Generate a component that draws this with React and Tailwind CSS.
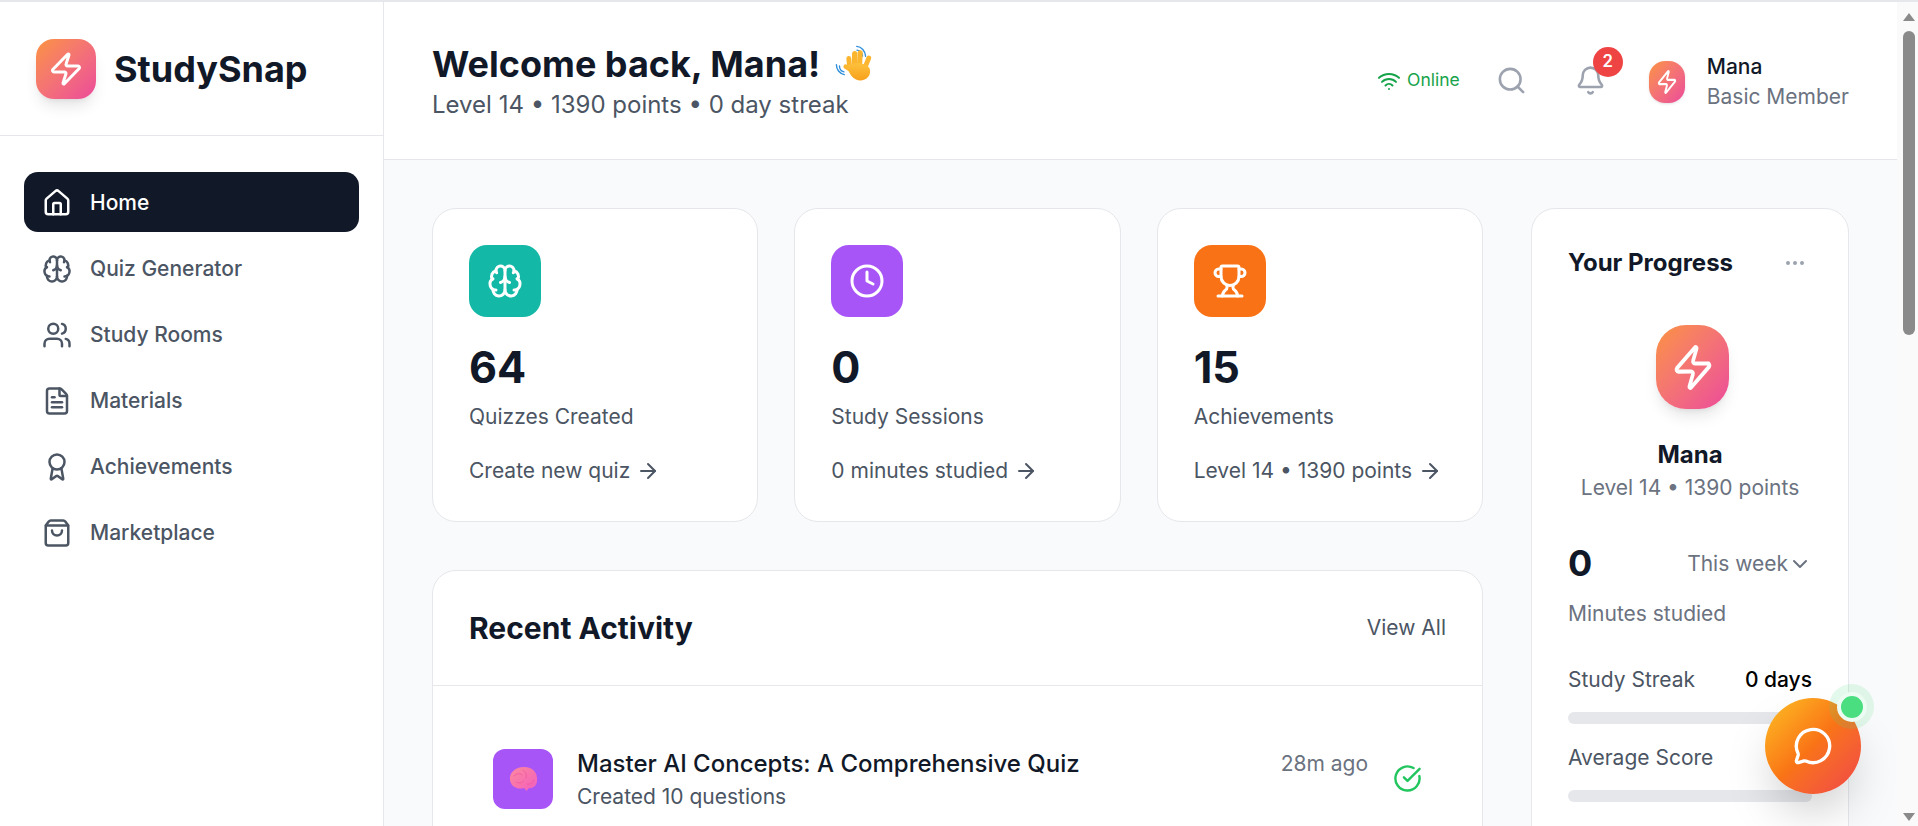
import React from "react";
import { House, Brain, Users, FileText, Award, ShoppingBag, Zap, Wifi, Search, Bell, Clock, Trophy, ArrowRight, Ellipsis, ChevronDown, MessageCircle, CircleCheckBig } from "lucide-react";

function WaveEmoji() {
  return (
    <svg viewBox="0 0 180 180" className="w-[62px] h-[62px] ml-[5px] mt-[4px] shrink-0">
      <defs>
        <linearGradient id="hand" x1="0" y1="0" x2="0" y2="1">
          <stop offset="0" stopColor="#fdc13c" />
          <stop offset="1" stopColor="#f8a01c" />
        </linearGradient>
      </defs>
      <g fill="none" stroke="#2f8fdc" strokeWidth="4" strokeLinecap="round">
        <path d="M92 33C106 34 117 46 118 62" />
        <path d="M93 44C102 45 108 52 109 61" />
        <path d="M33 86C33 100 42 112 56 115" />
        <path d="M42 90C42 98 47 105 55 107" />
      </g>
      <g stroke="#fbb52f" strokeLinecap="round" fill="none">
        <path d="M72 98 69 68" strokeWidth="14" />
        <path d="M85 92 86 54" strokeWidth="15" />
        <path d="M100 92 102 52" strokeWidth="15" />
        <path d="M114 100 127 67" strokeWidth="14" />
        <path d="M76 102 60 92" strokeWidth="13" />
      </g>
      <path fill="url(#hand)" d="M64 90C80 78 120 78 130 98 135 118 120 133 100 132 84 131 70 116 64 90Z" />
    </svg>
  );
}

function BrainEmoji() {
  return (
    <svg viewBox="0 0 60 60" className="w-[60px] h-[60px]">
      <defs>
        <linearGradient id="brain" x1="0" y1="0" x2="1" y2="1">
          <stop offset="0" stopColor="#fb8a9e" />
          <stop offset="0.6" stopColor="#f76fb0" />
          <stop offset="1" stopColor="#ee5fc4" />
        </linearGradient>
      </defs>
      <path fill="url(#brain)" d="M17 31C16 24 22 18 31 18 40 18 45 24 44 32 44 37 39 40 36 39L33.500 42 31 39C25 41 18 38 17 31Z" />
      <path fill="none" stroke="#f0559f" strokeWidth="0.800" strokeLinecap="round" d="M21 27C24 24 27 24 29 26M30 21C33 23 34 26 33 29M23 33C26 35 29 34 31 32M34 35C37 36 40 34 41 31" />
    </svg>
  );
}

const nav = [
  [House, "Home", true],
  [Brain, "Quiz Generator"],
  [Users, "Study Rooms"],
  [FileText, "Materials"],
  [Award, "Achievements"],
  [ShoppingBag, "Marketplace"],
];

const stats = [
  [Brain, "bg-[#14b8a6]", "64", "Quizzes Created", "Create new quiz"],
  [Clock, "bg-[#a855f7]", "0", "Study Sessions", "0 minutes studied"],
  [Trophy, "bg-[#f97316]", "15", "Achievements", "Level 14 • 1390 points"],
];

function Sidebar() {
  return (
    <aside className="w-[384px] shrink-0 bg-white border-r border-gray-200 flex flex-col">
      <div className="h-[134px] shrink-0 border-b border-gray-200 flex items-center pl-9 gap-[18px]">
        <div className="w-[60px] h-[60px] rounded-[18px] bg-gradient-to-br from-[#fb923c] to-[#ec4899] shadow-lg flex items-center justify-center shrink-0">
          <Zap className="w-[36px] h-[36px] text-white" strokeWidth={2} />
        </div>
        <span className="text-[36px] leading-[44px] font-bold text-[#111827]">StudySnap</span>
      </div>
      <nav className="px-6 pt-9 flex flex-col gap-1.5">
        {nav.map(([Icon, label, active]) => (
          <div key={label} className={`h-[60px] rounded-[14px] flex items-center pl-[18px] gap-[18px] text-[21px] font-medium ${active ? "bg-[#111827] text-white" : "text-[#4b5563]"}`}>
            <Icon className="w-[30px] h-[30px] shrink-0 mt-[2px]" strokeWidth={2} />
            <span className="pt-[2px]">{label}</span>
          </div>
        ))}
      </nav>
    </aside>
  );
}

function Header() {
  return (
    <header className="h-[158px] shrink-0 bg-white border-b border-gray-200 flex items-center justify-between pl-12 pr-12">
      <div className="pt-[1px]">
        <div className="flex items-center h-[44px]">
          <h1 className="text-[36px] leading-[44px] font-bold text-[#111827]">Welcome back, Mana!</h1>
          <WaveEmoji />
        </div>
        <p className="text-[24px] leading-[32px] text-[#4b5563] mt-[3px]">Level 14 • 1390 points • 0 day streak</p>
      </div>
      <div className="flex items-center">
        <div className="flex items-center gap-[6px] text-[#16a34a] text-[17.500px]">
          <Wifi className="w-6 h-6" strokeWidth={2} />
          <span>Online</span>
        </div>
        <Search className="w-[31px] h-[31px] text-[#9ca3af] ml-9" strokeWidth={2} />
        <div className="relative ml-[48px] w-[31px] h-[31px]">
          <Bell className="w-[31px] h-[31px] text-[#9ca3af]" strokeWidth={2} />
          <span className="absolute -top-[18px] -right-[17px] w-[30px] h-[30px] rounded-full bg-[#ef4444] text-white text-[16.800px] font-semibold flex items-center justify-center">2</span>
        </div>
        <div className="ml-[43px] mt-[2px] w-9 h-[42px] rounded-[16px] bg-gradient-to-br from-[#fb923c] to-[#ec4899] shadow-sm flex items-center justify-center">
          <Zap className="w-[22px] h-[26px] text-white" strokeWidth={2} preserveAspectRatio="none" />
        </div>
        <div className="ml-[22px] pt-[2px]">
          <div className="text-[21px] leading-[28px] font-medium text-[#111827]">Mana</div>
          <div className="text-[21px] leading-[28px] text-[#6b7280] mt-[2px]">Basic Member</div>
        </div>
      </div>
    </header>
  );
}

function StatCard({ icon: Icon, color, value, label, link }) {
  return (
    <div className="h-[314px] bg-white border border-gray-200 rounded-[24px] p-9">
      <div className={`w-[72px] h-[72px] rounded-[18px] ${color} flex items-center justify-center`}>
        <Icon className="w-[36px] h-[36px] text-white" strokeWidth={2} />
      </div>
      <div className="mt-6 text-[43.200px] leading-[52px] font-bold text-[#111827]">{value}</div>
      <div className="mt-[12px] text-[21px] leading-[24px] text-[#4b5563]">{label}</div>
      <div className="mt-[30px] flex items-center gap-[6px] text-[21px] leading-[24px] text-[#4b5563]">
        <span>{link}</span>
        <ArrowRight className="w-6 h-6" strokeWidth={2} />
      </div>
    </div>
  );
}

function Activity() {
  return (
    <section className="h-[800px] mt-12 bg-white border border-gray-200 rounded-[24px]">
      <div className="h-[115px] border-b border-gray-200 flex items-center justify-between px-9">
        <h2 className="text-[30px] leading-[36px] font-bold text-[#111827]">Recent Activity</h2>
        <span className="text-[21px] text-[#4b5563]">View All</span>
      </div>
      <div className="pt-[63px] pl-[60px] pr-[60px] flex items-start">
        <div className="w-[60px] h-[60px] rounded-[12px] bg-[#a855f7] flex items-center justify-center shrink-0">
          <BrainEmoji />
        </div>
        <div className="ml-6 flex-1 pt-[1px]">
          <div className="text-[24px] leading-[28px] font-medium text-[#111827]">Master AI Concepts: A Comprehensive Quiz</div>
          <div className="text-[21px] leading-[24px] mt-[7px] text-[#4b5563]">Created 10 questions</div>
        </div>
        <div className="text-[21px] leading-[28px] text-[#6b7280] pt-[1px]">28m ago</div>
        <CircleCheckBig className="w-[29px] h-[29px] text-[#22c55e] ml-[25px] mt-[15px] shrink-0" strokeWidth={2} />
      </div>
    </section>
  );
}

function Bar({ label, value }) {
  return (
    <div>
      <div className="flex justify-between items-center h-[28px] text-[21px]">
        <span className="text-[#4b5563]">{label}</span>
        <span className="font-medium text-black">{value}</span>
      </div>
      <div className="h-3 mt-[18px] rounded-full bg-[#e5e7eb]" />
    </div>
  );
}

function Progress() {
  return (
    <aside className="h-[900px] w-[318px] shrink-0 bg-white border border-gray-200 rounded-[24px] px-9 pt-[38px]">
      <div className="flex items-center justify-between h-[32px]">
        <h3 className="text-[24px] font-bold text-[#111827]">Your Progress</h3>
        <Ellipsis className="w-[24px] h-[24px] text-[#9ca3af] mr-[5px]" strokeWidth={2} />
      </div>
      <div className="mt-[46px] flex flex-col items-center">
        <div className="w-[73px] h-[84px] ml-[5px] rounded-[30px] bg-gradient-to-br from-[#fb923c] to-[#ec4899] shadow-lg flex items-center justify-center">
          <Zap className="w-[44px] h-[49px] text-white" strokeWidth={2} preserveAspectRatio="none" />
        </div>
        <div className="mt-[30px] text-[24px] leading-[32px] font-bold text-[#111827]">Mana</div>
        <div className="text-[21px] leading-[28px] mt-[3px] text-[#6b7280]">Level 14 • 1390 points</div>
      </div>
      <div className="mt-[39px] flex items-center justify-between">
        <span className="text-[36px] leading-[44px] font-bold text-[#111827]">0</span>
        <span className="flex items-center text-[21px] text-[#6b7280] pt-[1px]">This week <ChevronDown className="w-6 h-6" strokeWidth={2} /></span>
      </div>
      <div className="mt-[13px] h-[28px] text-[21px] text-[#6b7280]">Minutes studied</div>
      <div className="mt-[40px]"><Bar label="Study Streak" value="0 days" /></div>
      <div className="mt-[20px]"><Bar label="Average Score" value="" /></div>
    </aside>
  );
}

function Scrollbar() {
  return (
    <div className="w-[21px] shrink-0 bg-[#fafafa] flex flex-col items-center">
      <svg viewBox="0 0 14 10" className="w-[14px] h-[10px] mt-[10px] ml-[3px] text-[#8a8a8a]"><path fill="currentColor" d="M7 1 13 9H1z" /></svg>
      <div className="w-3 h-[304px] mt-[9px] ml-[3px] rounded-full bg-[#8a8a8a]" />
      <svg viewBox="0 0 14 10" className="w-[14px] h-[10px] mt-auto mb-[4px] ml-[3px] text-[#8a8a8a]"><path fill="currentColor" d="M7 9 13 1H1z" /></svg>
    </div>
  );
}

export default function App() {
  return (
    <div className="relative h-[826px] overflow-hidden flex flex-col bg-white font-['Inter',sans-serif]">
      <div className="h-[2px] shrink-0 bg-[#e5e7eb]" />
      <div className="flex flex-1 min-h-0">
        <Sidebar />
        <div className="flex-1 min-w-0 flex flex-col">
          <Header />
          <main className="flex-1 min-h-0 overflow-hidden bg-[#f9fafb] p-12 flex gap-12 items-start">
            <div className="flex-1 min-w-0">
              <div className="grid grid-cols-3 gap-9">
                {stats.map(([icon, color, value, label, link]) => (
                  <StatCard key={label} icon={icon} color={color} value={value} label={label} link={link} />
                ))}
              </div>
              <Activity />
            </div>
            <Progress />
          </main>
        </div>
        <Scrollbar />
      </div>
      <div className="absolute left-[1765px] top-[698px] w-[96px] h-[96px] rounded-full bg-gradient-to-br from-[#fbbf24] via-[#f97316] to-[#ef4444] shadow-2xl flex items-center justify-center">
        <MessageCircle className="w-[40px] h-[40px] text-white" strokeWidth={2} />
        <span className="absolute left-[64px] -top-[14px] w-[45px] h-[45px] rounded-full bg-[#4ade80]/15" />
        <span className="absolute left-[72px] -top-[6px] w-[30px] h-[30px] rounded-full bg-[#4ade80] border-[4px] border-white/90" />
      </div>
    </div>
  );
}
